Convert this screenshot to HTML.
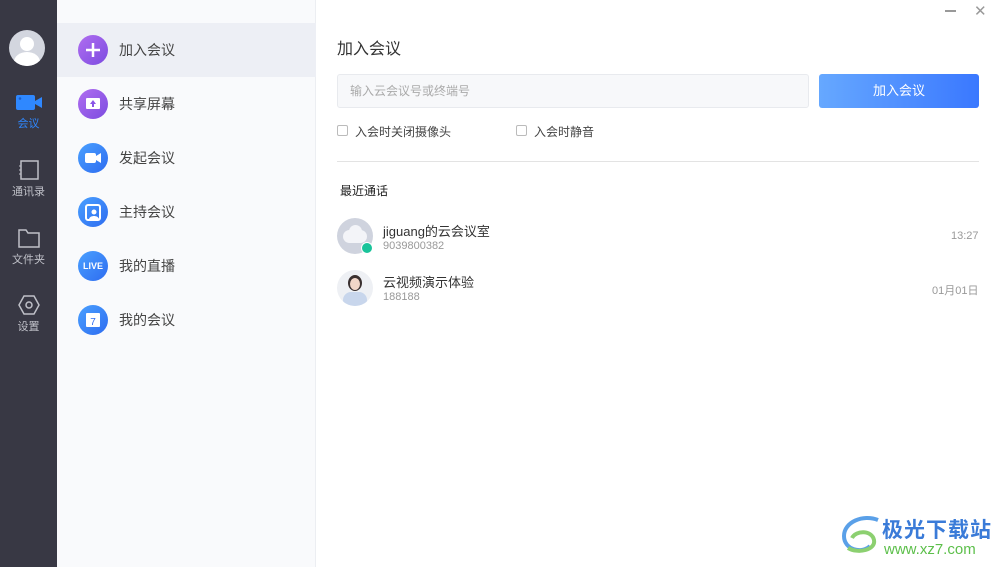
<!DOCTYPE html>
<html><head><meta charset="utf-8"><style>
*{margin:0;padding:0;box-sizing:border-box}
body{width:998px;height:567px;overflow:hidden;position:relative;background:#fff;font-family:"Liberation Sans","Noto Sans CJK SC",sans-serif;color:#333}
.side{position:absolute;left:0;top:0;width:57px;height:567px;background:#383844}
.avatar{position:absolute;left:9px;top:30px;width:36px;height:36px;border-radius:50%;background:#d3d6df;overflow:hidden}
.nav{position:absolute;left:0;width:57px;text-align:center;font-size:11px;color:#bfc0c8}
.menu{position:absolute;left:57px;top:0;width:259px;height:567px;background:#f9fafc;border-right:1px solid #eceef2}
.mi{position:absolute;left:0;width:259px;height:54px}
.mi .ic{position:absolute;left:21px;top:12px;width:30px;height:30px;border-radius:50%}
.mi span{position:absolute;left:62px;top:17px;font-size:14px;color:#444}
.pur{background:linear-gradient(135deg,#b06ef0,#7c4be0)}
.blu{background:linear-gradient(135deg,#4aa0ff,#2e6cf0)}
.abs{position:absolute}
</style></head><body>
<div class="side">
 <div class="avatar"><div class="abs" style="left:11px;top:7px;width:14px;height:14px;border-radius:50%;background:#fff"></div><div class="abs" style="left:5px;top:22px;width:26px;height:20px;border-radius:50%;background:#fff"></div></div>
 <div class="nav" style="top:93px"><svg width="28" height="18"><rect x="1" y="2" width="19" height="15" rx="2" fill="#2f88ff"/><path d="M20 8l7-4v11l-7-4z" fill="#2f88ff"/><circle cx="5" cy="5.5" r="1.3" fill="#1a5fcc"/></svg><div style="color:#2f88ff;margin-top:1px">会议</div></div>
 <div class="nav" style="top:160px"><svg width="22" height="20"><rect x="3" y="1" width="17" height="18" fill="none" stroke="#bfc0c8" stroke-width="1.5"/><path d="M3 6h-2M3 10h-2M3 14h-2" stroke="#bfc0c8"/></svg><div>通讯录</div></div>
 <div class="nav" style="top:228px"><svg width="24" height="20"><path d="M2 2h7l2 3h11v14H2z" fill="none" stroke="#bfc0c8" stroke-width="1.5"/></svg><div>文件夹</div></div>
 <div class="nav" style="top:295px"><svg width="22" height="20"><path d="M6 1h10l5 9-5 9H6l-5-9z" fill="none" stroke="#bfc0c8" stroke-width="1.5"/><circle cx="11" cy="10" r="3" fill="none" stroke="#bfc0c8" stroke-width="1.5"/></svg><div>设置</div></div>
</div>
<div class="menu">
 <div class="mi" style="top:23px;background:#edeff5"><div class="ic pur"><svg width="30" height="30"><path d="M15 8v14M8 15h14" stroke="#fff" stroke-width="2.5"/></svg></div><span>加入会议</span></div>
 <div class="mi" style="top:77px"><div class="ic pur"><svg width="30" height="30"><rect x="8" y="9" width="14" height="11" rx="1" fill="#fff"/><path d="M15 11l-3 4h2v3h2v-3h2z" fill="#8a55e6"/></svg></div><span>共享屏幕</span></div>
 <div class="mi" style="top:131px"><div class="ic blu"><svg width="30" height="30"><rect x="7" y="10" width="11" height="10" rx="2" fill="#fff"/><path d="M18 13l5-3v10l-5-3z" fill="#fff"/></svg></div><span>发起会议</span></div>
 <div class="mi" style="top:185px"><div class="ic blu"><svg width="30" height="30"><rect x="8" y="8" width="14" height="15" rx="2" fill="none" stroke="#fff" stroke-width="2"/><circle cx="16" cy="15" r="2.5" fill="#fff"/><path d="M11 22c1-4 9-4 10 0z" fill="#fff"/></svg></div><span>主持会议</span></div>
 <div class="mi" style="top:239px"><div class="ic blu" style="color:#fff;font-size:9px;font-weight:bold;text-align:center;line-height:30px">LIVE</div><span>我的直播</span></div>
 <div class="mi" style="top:293px"><div class="ic blu"><svg width="30" height="30"><rect x="8" y="8" width="14" height="14" rx="1" fill="#fff"/><text x="15" y="20" font-size="10" fill="#2e6cf0" text-anchor="middle" font-family="Liberation Sans">7</text></svg></div><span>我的会议</span></div>
</div>
<div class="abs" style="left:945px;top:10px;width:11px;height:2px;background:#999"></div>
<div class="abs" style="left:974px;top:2px;font-size:15px;color:#999">✕</div>
<div class="abs" style="left:337px;top:35px;font-size:16px;color:#333">加入会议</div>
<div class="abs" style="left:337px;top:74px;width:472px;height:34px;background:#f7f8fa;border:1px solid #e8eaee;border-radius:3px;font-size:12px;color:#aaa;line-height:32px;padding-left:12px">输入云会议号或终端号</div>
<div class="abs" style="left:819px;top:74px;width:160px;height:34px;border-radius:3px;background:linear-gradient(90deg,#66a8ff,#3a78ff);color:#fff;font-size:13px;text-align:center;line-height:34px">加入会议</div>
<div class="abs" style="left:337px;top:125px;width:11px;height:11px;border:1px solid #bbb;border-radius:2px"></div>
<div class="abs" style="left:355px;top:123px;font-size:12px;color:#444">入会时关闭摄像头</div>
<div class="abs" style="left:516px;top:125px;width:11px;height:11px;border:1px solid #bbb;border-radius:2px"></div>
<div class="abs" style="left:534px;top:123px;font-size:12px;color:#444">入会时静音</div>
<div class="abs" style="left:337px;top:161px;width:642px;height:1px;background:#e3e3e3"></div>
<div class="abs" style="left:340px;top:182px;font-size:12px;color:#222">最近通话</div>
<div class="abs" style="left:337px;top:218px;width:36px;height:36px;border-radius:50%;background:#cfd3de"><div class="abs" style="left:6px;top:12px;width:24px;height:13px;border-radius:7px;background:#f3f4f8"></div><div class="abs" style="left:12px;top:7px;width:13px;height:13px;border-radius:50%;background:#f3f4f8"></div><div class="abs" style="left:24px;top:24px;width:12px;height:12px;border-radius:50%;background:#19c39a;border:1px solid #fff"></div></div>
<div class="abs" style="left:383px;top:221px;font-size:13px;color:#333">jiguang的云会议室</div>
<div class="abs" style="left:383px;top:240px;font-size:11px;color:#999">9039800382</div>
<div class="abs" style="left:951px;top:230px;font-size:11px;color:#999">13:27</div>
<div class="abs" style="left:337px;top:270px;width:36px;height:36px;border-radius:50%;background:#eef0f4;overflow:hidden"><div class="abs" style="left:11px;top:5px;width:14px;height:16px;border-radius:50%;background:#3a3030"></div><div class="abs" style="left:13px;top:8px;width:10px;height:12px;border-radius:50%;background:#f2d6c8"></div><div class="abs" style="left:6px;top:22px;width:24px;height:16px;border-radius:8px;background:#c8d6ec"></div></div>
<div class="abs" style="left:383px;top:272px;font-size:13px;color:#333">云视频演示体验</div>
<div class="abs" style="left:383px;top:291px;font-size:11px;color:#999">188188</div>
<div class="abs" style="left:932px;top:282px;font-size:11px;color:#999">01月01日</div>
<svg class="abs" style="left:838px;top:512px" width="46" height="46"><path d="M40 8C25 2 6 10 6 24s18 18 26 10" fill="none" stroke="#5aa0e8" stroke-width="4"/><path d="M14 26c4-8 20-8 22 2s-16 14-26 8" fill="none" stroke="#8cd070" stroke-width="4"/></svg>
<div class="abs" style="left:882px;top:514px;font-size:21px;font-weight:bold;color:#3a7bd8;letter-spacing:1px">极光下载站</div>
<div class="abs" style="left:884px;top:541px;font-size:15px;color:#5cbf4a">www.xz7.com</div>
</body></html>
